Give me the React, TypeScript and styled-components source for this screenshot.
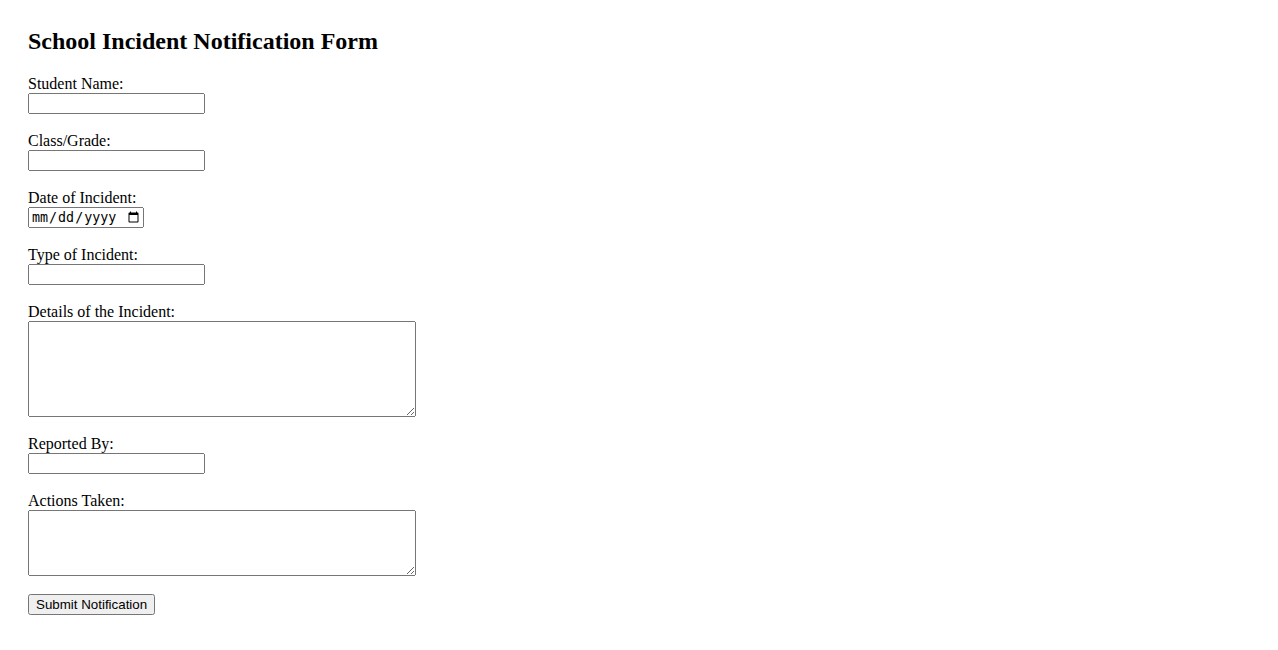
import React from "react";
import styled, { createGlobalStyle } from "styled-components";

const GlobalStyle = createGlobalStyle`
  body {
    margin: 0;
    background: #ffffff;
    color: #000000;
    font-family: "Liberation Serif", "Times New Roman", serif;
    font-size: 16px;
  }
`;

const Page = styled.div`
  padding: 28px;
`;

const Title = styled.h2`
  font-size: 24px;
  font-weight: bold;
  margin: 0 0 19.92px;
  line-height: normal;
`;

const Form = styled.form`
  display: flex;
  flex-direction: column;
  align-items: flex-start;
`;

const Field = styled.div`
  display: flex;
  flex-direction: column;
  align-items: flex-start;
  margin-bottom: 18px;
`;

const Label = styled.label`
  display: block;
  line-height: normal;
`;

const TextInput = styled.input<{ $width?: number }>`
  display: block;
  margin: 0;
  box-sizing: border-box;
  width: ${(p) => p.$width ?? 177}px;
  height: 21px;
`;

const TextArea = styled.textarea<{ $height: number }>`
  display: block;
  margin: 0;
  box-sizing: border-box;
  width: 388px;
  height: ${(p) => p.$height}px;
`;

const SubmitButton = styled.button`
  font-family: "Liberation Sans", Arial, sans-serif;
  font-size: 13.333px;
  height: 21px;
  margin: 0;
`;

const fields: { id: string; label: string; kind: "text" | "date" | "area"; height?: number }[] = [
  { id: "studentName", label: "Student Name:", kind: "text" },
  { id: "classGrade", label: "Class/Grade:", kind: "text" },
  { id: "incidentDate", label: "Date of Incident:", kind: "date" },
  { id: "incidentType", label: "Type of Incident:", kind: "text" },
  { id: "details", label: "Details of the Incident:", kind: "area", height: 96 },
  { id: "reportedBy", label: "Reported By:", kind: "text" },
  { id: "actions", label: "Actions Taken:", kind: "area", height: 66 },
];

export default function App() {
  return (
    <Page>
      <GlobalStyle />
      <Title>School Incident Notification Form</Title>
      <Form onSubmit={(e) => e.preventDefault()}>
        {fields.map((f) => (
          <Field key={f.id}>
            <Label htmlFor={f.id}>{f.label}</Label>
            {f.kind === "area" ? (
              <TextArea id={f.id} $height={f.height ?? 66} />
            ) : f.kind === "date" ? (
              <TextInput id={f.id} type="date" $width={116} />
            ) : (
              <TextInput id={f.id} type="text" />
            )}
          </Field>
        ))}
        <SubmitButton type="submit">Submit Notification</SubmitButton>
      </Form>
    </Page>
  );
}
